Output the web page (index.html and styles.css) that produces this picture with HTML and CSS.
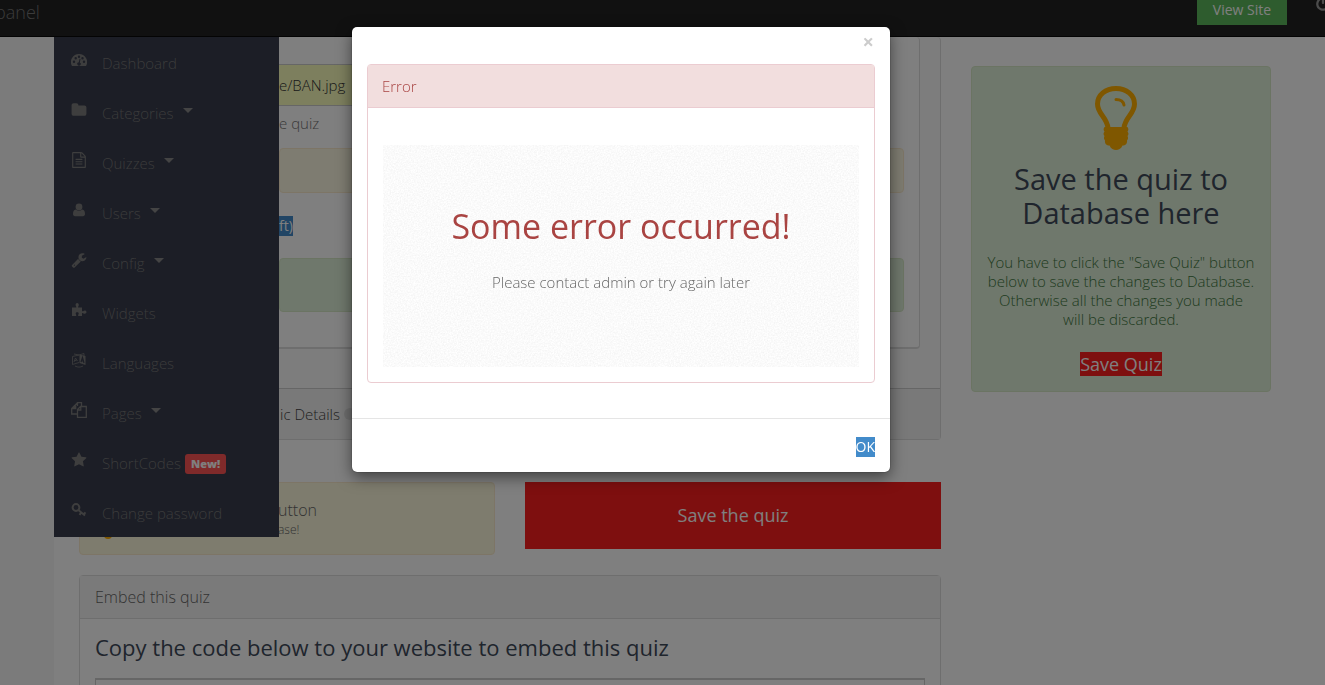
FILE: index.html
```
<!DOCTYPE html>
<html lang="en">
<head>
  <meta charset="utf-8">
  <title>Admin panel</title>
  <meta name="viewport" content="width=device-width, initial-scale=1">
  <link rel="stylesheet" href="styles.css">
</head>
<body>
  <header class="navbar">
    <a class="brand" href="#">panel</a>
    <div class="navbar-right">
      <button type="button" class="btn-view">View Site</button>
      <a class="logout" href="#" aria-label="Log out"><svg class="icon" viewBox="0 0 1792 1792"><path d="M1664 896q0 156-61 298t-164 245-245 164-298 61-298-61-245-164-164-245-61-298q0-182 80.500-343t226.500-270q43-32 95.500-25t83.500 50q32 42 24.500 94.500t-49.500 84.500q-98 74-151.500 181t-53.500 228q0 104 40.500 198.500t109.500 163.500 163.500 109.500 198.500 40.500 198.500-40.500 163.500-109.500 109.500-163.500 40.500-198.500q0-121-53.500-228t-151.500-181q-42-32-49.500-84.500t24.500-94.500q31-43 84-50t95 25q146 109 226.500 270t80.500 343zm-640-768v640q0 52-38 90t-90 38-90-38-38-90v-640q0-52 38-90t90-38 90 38 38 90z"/></svg></a>
    </div>
  </header>

  <nav class="sidebar">
    <a href="#"><svg class="icon" viewBox="0 0 16 16"><path fill-rule="evenodd" d="M8 2a8 8 0 0 0-7 12h14A8 8 0 0 0 8 2zM3 8.500a1.200 1.200 0 1 1 0 2.400 1.200 1.200 0 0 1 0-2.400zM4.700 5a1.200 1.200 0 1 1 0 2.400 1.200 1.200 0 0 1 0-2.400zM8 3.500a1.200 1.200 0 1 1 0 2.400 1.200 1.200 0 0 1 0-2.400zM11.500 5a1.200 1.200 0 1 1 0 2.400 1.200 1.200 0 0 1 0-2.400zM13 8.500a1.200 1.200 0 1 1 0 2.400 1.200 1.200 0 0 1 0-2.400zM8.600 6.800l.9.200-.7 3.400a1.700 1.700 0 1 1-1-.2z"/></svg>Dashboard</a>
    <a href="#"><svg class="icon" viewBox="0 0 1792 1792"><path d="M1728 608v704q0 92-66 158t-158 66h-1216q-92 0-158-66t-66-158v-960q0-92 66-158t158-66h320q92 0 158 66t66 158v32h672q92 0 158 66t66 158z"/></svg>Categories<span class="caret"></span></a>
    <a href="#"><svg class="icon" viewBox="0 0 1792 1792"><path d="M1596 380q28 28 48 76t20 88v1152q0 40-28 68t-68 28h-1344q-40 0-68-28t-28-68v-1600q0-40 28-68t68-28h896q40 0 88 20t76 48zm-444-244v376h376q-10-29-22-41l-313-313q-12-12-41-22zm384 1528v-1024h-416q-40 0-68-28t-28-68v-416h-768v1536h1280zm-1024-864q0-14 9-23t23-9h704q14 0 23 9t9 23v64q0 14-9 23t-23 9h-704q-14 0-23-9t-9-23v-64zm736 224q14 0 23 9t9 23v64q0 14-9 23t-23 9h-704q-14 0-23-9t-9-23v-64q0-14 9-23t23-9h704zm0 256q14 0 23 9t9 23v64q0 14-9 23t-23 9h-704q-14 0-23-9t-9-23v-64q0-14 9-23t23-9h704z"/></svg>Quizzes<span class="caret"></span></a>
    <a href="#"><svg class="icon" viewBox="0 0 16 16"><circle cx="8" cy="5" r="3.400"/><path d="M4.800 7.500a4.800 4.800 0 0 0 6.400 0c2.200.2 2.800 2.500 2.800 4.500 0 1.300-.8 2.200-2 2.200H4c-1.200 0-2-.9-2-2.200 0-2 .6-4.300 2.800-4.500z"/></svg>Users<span class="caret"></span></a>
    <a href="#"><svg class="icon" viewBox="0 0 1792 1792"><path d="M448 1472q0-26-19-45t-45-19-45 19-19 45 19 45 45 19 45-19 19-45zm644-420l-682 682q-37 37-90 37-52 0-91-37l-106-108q-38-36-38-90 0-53 38-91l681-681q39 98 114.500 173.500t173.500 114.500zm634-435q0 39-23 106-47 134-164.500 217.500t-258.500 83.500q-185 0-316.500-131.500t-131.500-316.500 131.500-316.500 316.500-131.500q58 0 121.500 16.500t107.500 46.500q16 11 16 28t-16 28l-293 169v224l193 107q5-3 79-48.500t135.500-81 70.500-35.500q15 0 23.500 10t8.500 25z"/></svg>Config<span class="caret"></span></a>
    <a href="#"><svg class="icon" viewBox="0 0 16 16"><path d="M1 5.500h4.200c.6-1-.6-1.400-.6-2.600C4.600 1.800 5.200 1 6.200 1s1.600.8 1.600 1.900c0 1.200-1.200 1.600-.6 2.600H11v3.600c1 .8 1.500-.6 2.700-.6 1 0 1.800.6 1.800 1.600s-.8 1.700-1.800 1.700c-1.200 0-1.700-1.300-2.700-.6V14H7.400c-.9-1 .3-1.600.3-2.500 0-.8-.6-1.300-1.500-1.300s-1.500.5-1.500 1.300c0 .9 1.200 1.500.3 2.500H1z"/></svg>Widgets</a>
    <a href="#"><svg class="icon" viewBox="0 0 16 16"><path d="M8.500 2.500 14.500 4v9l-6-2z"/><path class="thin" d="M8 3 1.500 4.500v8L8 10.500M3 2l5 1 5-1.500V4M4 14c3 1.500 5 1.500 8 0M3 10l1.500-4L6.500 9M3.500 8.500h2"/><path class="cut" d="M10 10l1.500-4.500L13 11M10.500 9h2"/></svg>Languages</a>
    <a href="#"><svg class="icon" viewBox="0 0 16 16"><path class="line" d="M6.500 4V.7h4v4M6.500.7 3.500 3.700v2M.7 6.500h4v-3M6 12H.7V6.500l3-3M6.500 15.300V7.500l3-3h5.800v10.800zM6.500 8h3.300V4.500"/></svg>Pages<span class="caret"></span></a>
    <a href="#"><svg class="icon" viewBox="0 0 1792 1792"><path d="M1728 647q0 22-26 48l-363 354 86 500q1 7 1 20 0 21-10.500 35.500t-30.500 14.500q-19 0-40-12l-449-236-449 236q-22 12-40 12-21 0-31.500-14.500t-10.500-35.500q0-6 2-20l86-500-364-354q-25-27-25-48 0-37 56-46l502-73 225-455q19-41 49-41t49 41l225 455 502 73q56 9 56 46z"/></svg>ShortCodes<span class="label-new">New!</span></a>
    <a href="#"><svg class="icon" viewBox="0 0 16 16"><circle class="ring" cx="5" cy="5.500" r="3.400"/><path class="ring" d="M7.300 8l6.700 5.500M10 10.500 8.600 13M12.500 12.500l2-2.200"/></svg>Change password</a>
  </nav>

  <main class="content">
    <div class="column">
      <section class="panel panel-top">
        <div class="panel-main">
          <div class="inner-panel">
            <input type="text" class="image-url" value="e/BAN.jpg" aria-label="Image">
            <p class="help">e quiz</p>
            <div class="alert alert-warning slim"></div>
            <button type="button" class="btn-draft">ft)</button>
            <div class="alert alert-success tall"></div>
          </div>
        </div>
        <div class="panel-foot">ic Details <span class="dot"></span></div>
      </section>

      <div class="save-row">
        <div class="alert alert-warning tip">
          <div>utton</div>
          <small>ase!</small>
          <span class="tip-dot"></span>
        </div>
        <button type="button" class="btn-save-big">Save the quiz</button>
      </div>

      <section class="panel embed">
        <div class="panel-heading">Embed this quiz</div>
        <div class="embed-body">
          <h3><label for="code">Copy the code below to your website to embed this quiz</label></h3>
          <textarea id="code" rows="4"></textarea>
        </div>
      </section>
    </div>

    <aside class="alert alert-success save-box">
      <svg class="bulb" viewBox="0 0 44 64"><path class="glass" d="M14 42C13 31 3.500 28 3.500 18 3.500 9 11.500 2.500 22 2.500S40.500 9 40.500 18c0 10-9.500 13-10.500 24"/><path class="shine" d="M22 13.500c5 0 7.500 2.500 8 5.500"/><path d="M10.500 41h23c1.500 2 .8 3.500 0 4.500 1.300 1.500 1.300 3 0 4.500 1 1.500.5 3.500-.5 4.500.5 3-1.500 5-4.500 5C27 63 24.500 64 22 64S17 63 15.500 59.500c-3 0-5-2-4.500-5-1-1-1.500-3-.5-4.500-1.300-1.500-1.300-3 0-4.500-.8-1-1.500-2.500 0-4.500z"/></svg>
      <h2>Save the quiz to Database here</h2>
      <p>You have to click the "Save Quiz" button below to save the changes to Database. Otherwise all the changes you made will be discarded.</p>
      <button type="button" class="btn-save">Save Quiz</button>
    </aside>
  </main>

  <div class="backdrop"></div>

  <div class="modal">
    <div class="modal-dialog" role="dialog" aria-modal="true" aria-labelledby="modal-title">
      <div class="modal-header"><button type="button" class="close" aria-label="Close">&times;</button></div>
      <div class="modal-body">
        <div class="panel-danger">
          <div class="danger-heading">Error</div>
          <div class="danger-body">
            <div class="jumbotron">
              <svg class="grain" aria-hidden="true">
                <filter id="grain"><feTurbulence type="fractalNoise" baseFrequency="0.7" numOctaves="2"/><feColorMatrix values="0 0 0 0 .9  0 0 0 0 .9  0 0 0 0 .9  1.800 0 0 0 -.5"/></filter>
                <rect width="100%" height="100%" filter="url(#grain)"/>
              </svg>
              <h1 id="modal-title">Some error occurred!</h1>
              <p>Please contact admin or try again later</p>
            </div>
          </div>
        </div>
      </div>
      <div class="modal-footer"><button type="button" class="btn-ok">OK</button></div>
    </div>
  </div>
</body>
</html>
```
FILE: styles.css
```
* {box-sizing: border-box;}
body {margin: 0; height: 100vh; overflow: hidden; background: #f7f7f7; color: #666; font-family: "Open Sans", sans-serif; font-size: 15px; font-weight: 300; line-height: 20px;}
h1, h2, h3, p {margin: 0; font-weight: 400;}
p {font-weight: 300;}
a {color: inherit; text-decoration: none;}
button, input, textarea {font: inherit; border: 0; border-radius: 0; padding: 0;}
svg {fill: currentColor;}

/* top bar */
.navbar {position: fixed; top: 0; left: 0; right: 0; z-index: 3; height: 37px; display: flex; justify-content: space-between; background: #222; border-bottom: 1px solid #080808; color: #777; overflow: hidden;}
.brand {margin-left: -5px; font-size: 18px; line-height: 24px;}
.navbar-right {display: flex; align-items: flex-start; gap: 28px; margin-right: -6px;}
.btn-view {width: 90px; height: 25px; padding-bottom: 5px; background: #5cb85c; color: #fff; font-size: 14px; font-weight: 400;}
.logout {height: 12px; color: #999;}
.logout .icon {margin-top: -4px;}

/* side menu */
.icon {width: 16px; height: 16px; flex: none; display: block;}
.sidebar {position: fixed; top: 37px; left: 54px; z-index: 2; width: 225px; background: #383c4c; color: #777;}
.sidebar a {display: flex; align-items: center; height: 50px; padding: 1px 0 0 17px;}
.sidebar .icon {margin: 0 15px 5px 0; color: #7c7c7c;}
.line {fill: none; stroke: currentColor; stroke-width: 1.3;}
.thin {fill: none; stroke: currentColor; stroke-width: .8;}
.ring {fill: none; stroke: currentColor; stroke-width: 2;}
.cut {fill: none; stroke: #383c4c; stroke-width: 1.2;}
.caret {margin: 0 0 5px 9px; border: 5px solid transparent; border-top-color: #888; border-bottom: 0;}
.label-new {margin: 3px 0 0 4px; padding: 0 6px; border-radius: 3px; background: #ff5555; color: #fff; font-size: 11px; font-weight: 800;}

/* page */
.content {display: grid; grid-template-columns: minmax(0, 1fr) 300px; align-items: start; gap: 30px; margin-left: 54px; padding: 37px 54px 0 25px; background: #fff; min-height: 100vh;}
.panel {border: 1px solid #ddd; border-radius: 4px; background: #fff;}
.panel-top {border-top: 0; background: #fafafa;}
.panel-main {padding: 0 20px 39px 15px;}
.inner-panel {padding: 27px 15px 35px 183px; border: 1px solid #ddd; border-top: 0; border-bottom-width: 2px; border-radius: 4px; background: #fff;}
.image-url {display: block; width: 80%; height: 42px; border: 1px solid #ccc; border-left: 0; background: #faffbd; color: #333;}
.help {padding: 7px 0 15px; color: #737373;}
.alert {border: 1px solid; border-radius: 4px;}
.alert-warning {background: #fcf8e3; border-color: #faebcc; color: #666;}
.alert-success {background: #dff0d8; border-color: #d6e9c6; color: #3c763d;}
.slim {height: 45px; margin-bottom: 23px;}
.tall {height: 54px; margin-top: 22px;}
.btn-draft {display: block; background: #428bca; color: #fff; font-size: 14px; font-weight: 400; line-height: 20px;}
.panel-foot {display: flex; align-items: center; gap: 4px; height: 51px; padding-left: 200px; border-top: 1px solid #ccc; background: #f2f2f2; color: #444;}
.dot {width: 12px; height: 12px; border-radius: 6px; background: #ddd;}
.save-row {display: grid; grid-template-columns: 1fr 1fr; gap: 30px; align-items: start; margin: 42px 0 20px;}
.tip {position: relative; height: 73px; padding: 17px 0 0 198px; background: #fcf8dc; font-size: 16px;}
.tip small {display: block; font-size: 12px; line-height: 19px;}
.tip-dot {position: absolute; left: 24px; top: 48px; width: 8px; height: 8px; border-radius: 4px; background: #ffae00;}
.btn-save-big {height: 67px; padding-bottom: 2px; background: #fc1e1e; color: #fff; font-size: 18px; font-weight: 400;}
.panel-heading {height: 43px; padding: 11px 15px; border-bottom: 1px solid #ddd; background: #f5f5f5; font-size: 16px;}
.embed-body {padding: 15px;}
.embed h3 {margin-bottom: 17px; color: #3f4a5a; font-size: 22px; line-height: 27px;}
.embed textarea {display: block; width: 100%; border: 1px solid #ccc; border-top-width: 2px; resize: none;}

.save-box {margin-top: 29px; padding: 19px 15px 15px; text-align: center;}
.bulb {display: block; width: 44px; height: 64px; margin: 0 auto 12px; color: #ffae00; position: relative; right: 5px;}
.glass {fill: none; stroke: currentColor; stroke-width: 5;}
.shine {fill: none; stroke: currentColor; stroke-width: 3; stroke-linecap: round;}
.save-box h2 {margin-bottom: 23px; color: #3f4a5a; font-size: 29px; line-height: 34px;}
.save-box p {margin-bottom: 23px; line-height: 19px;}
.btn-save {display: block; margin: 0 auto; background: #fc1e1e; color: #fff; font-size: 18px; font-weight: 400; line-height: 24px;}

/* dialog */
.backdrop {position: fixed; inset: 0; z-index: 4; background: rgba(0, 0, 0, .5);}
.modal {position: fixed; inset: 0; z-index: 5; padding: 27px 83px 0 0;}
.modal-dialog {max-width: 538px; margin: 0 auto; border-radius: 5px; background: #fff; box-shadow: 0 5px 15px rgba(0, 0, 0, .5), 0 0 1px #000;}
.modal-header {display: flex; justify-content: flex-end; height: 37px; padding: 5px 16px 0;}
.close {height: 20px; background: none; color: #ccc; font-size: 20px; font-weight: 700; line-height: 20px;}
.modal-body {padding: 0 15px 35px;}
.panel-danger {border: 1px solid #ebccd1; border-radius: 4px;}
.danger-heading {padding: 11px 14px; border-bottom: 1px solid #ebccd1; background: #f2dede; color: #a94442;}
.danger-body {padding: 37px 15px 15px;}
.jumbotron {position: relative; padding: 60px 15px 75px; text-align: center;}
.grain {position: absolute; inset: 0; width: 100%; height: 100%;}
.jumbotron h1, .jumbotron p {position: relative;}
.jumbotron h1 {margin-bottom: 25px; color: #a94442; font-size: 34px; line-height: 42px;}
.modal-footer {display: flex; justify-content: flex-end; padding: 18px 15px 15px; border-top: 1px solid #e5e5e5;}
.btn-ok {background: #428bca; color: #fff; font-size: 14px; font-weight: 400; line-height: 20px;}
```
